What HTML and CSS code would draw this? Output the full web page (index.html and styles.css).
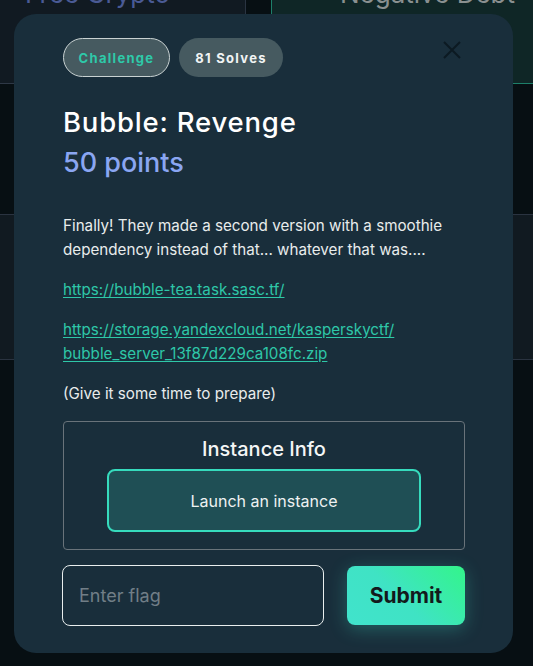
FILE: index.html
```html
<!DOCTYPE html>
<html>
<head>
<meta charset="utf-8">
<link rel="stylesheet" href="styles.css">
</head>
<body>
<div class="bg">
  <div class="row row-top">
    <div class="card card-left"><span class="card-title blue">Free Crypto</span></div>
    <div class="gap-col"></div>
    <div class="card card-right"><span class="card-title gray">Negative Debt</span></div>
  </div>
  <div class="row row-empty"></div>
  <div class="row row-mid">
    <div class="card card-plain"></div>
    <div class="gap-col"></div>
    <div class="card card-plain"></div>
  </div>
</div>

<div class="modal">
  <div class="modal-head">
    <div class="badges">
      <span class="badge badge-cat">Challenge</span>
      <span class="badge badge-solves">81 Solves</span>
    </div>
    <button class="close" aria-label="Close">
      <svg width="18" height="18" viewBox="0 0 18 18"><path d="M1 1L17 17M17 1L1 17" stroke="#0c1a22" stroke-width="2" fill="none"/></svg>
    </button>
  </div>
  <h1 class="title">Bubble: Revenge</h1>
  <div class="points">50 points</div>
  <div class="desc">
    <p class="p-text">Finally! They made a second version with a smoothie dependency instead of that... whatever that was....</p>
    <p class="p-link1"><a href="#">https://bubble-tea.task.sasc.tf/</a></p>
    <p class="p-link2"><a href="#">https://storage.yandexcloud.net/kasperskyctf/<br>bubble_server_13f87d229ca108fc.zip</a></p>
    <p class="p-note">(Give it some time to prepare)</p>
  </div>
  <div class="instance">
    <div class="instance-title">Instance Info</div>
    <button class="launch">Launch an instance</button>
  </div>
  <div class="flag-row">
    <input class="flag-input" type="text" placeholder="Enter flag">
    <button class="submit">Submit</button>
  </div>
</div>
</body>
</html>
```

FILE: styles.css
```css
* { box-sizing: border-box; }
html, body {
  margin: 0;
  padding: 0;
  background: #070f13;
  font-family: Inter, "Noto Sans", sans-serif;
  width: 533px;
  height: 666px;
  overflow: hidden;
}
.bg {
  display: flex;
  flex-direction: column;
}
.row {
  display: flex;
}
.row-top {
  height: 84px;
}
.gap-col {
  width: 25px;
  background: #070f13;
}
.card {
  flex: 1;
  position: relative;
  overflow: hidden;
}
.card-left {
  flex: 0 0 246px;
  background: #111a22;
  border-right: 1px solid #2a3442;
  border-bottom: 1px solid #2e3846;
}
.card-right {
  background: #0f2626;
  border-left: 1px solid #1d7f6a;
  border-bottom: 1px solid #1d7f6a;
}
.card-title {
  display: block;
  font-size: 26px;
  line-height: 26px;
  margin-top: -19px;
  white-space: nowrap;
}
.blue { color: #4a5a95; padding-left: 25px; }
.gray { color: #8a9090; padding-left: 68px; }
.row-empty {
  height: 130px;
}
.row-mid {
  height: 146px;
}
.card-plain {
  background: #111a21;
  border-top: 1px solid #2a3340;
  border-bottom: 1px solid #2a3340;
}
.row-mid .card-plain:first-child { flex: 0 0 246px; }
.row-mid .gap-col { background: #111a21; border-top: 1px solid #2a3340; border-bottom: 1px solid #2a3340; }

.modal {
  position: absolute;
  left: 14px;
  top: 14px;
  width: 499px;
  height: 639px;
  background: #192e3b;
  border-radius: 22px;
  padding: 24px 48px 0 49px;
  color: #f2f4f4;
}
.modal-head {
  display: flex;
  align-items: flex-start;
  justify-content: space-between;
}
.badges {
  display: flex;
  gap: 9px;
}
.badge {
  height: 39px;
  border-radius: 20px;
  background: #465a60;
  display: flex;
  align-items: center;
  font-size: 13px;
  font-weight: 700;
  letter-spacing: 1.3px;
}
.badge-cat {
  width: 107px;
  justify-content: center;
  border: 1px solid #c9d2d2;
  color: #2ec9a9;
}
.badge-solves {
  width: 104px;
  justify-content: center;
  color: #f1f4f4;
}
.close {
  background: none;
  border: 0;
  padding: 0;
  margin: 3px 4px 0 0;
  width: 18px;
  height: 18px;
  display: flex;
}
.title {
  margin: 28px 0 0;
  font-size: 27.5px;
  line-height: 34px;
  font-weight: 500;
  letter-spacing: 0.8px;
  color: #ffffff;
}
.points {
  margin-top: 7px;
  font-size: 27px;
  line-height: 34px;
  color: #8aa6f2;
  font-weight: 500;
}
.desc {
  margin-top: 34px;
  font-size: 15.2px;
  line-height: 24px;
  color: #e8ecec;
}
.desc p { margin: 0; }
.p-link1 { margin-top: 16px !important; }
.p-link2 { margin-top: 16px !important; }
.p-note { margin-top: 16px !important; }
.desc a {
  color: #2ec7a8;
  text-decoration: underline;
  text-underline-offset: 2px;
}
.instance {
  margin-top: 15px;
  width: 402px;
  height: 129px;
  border: 1px solid #69737a;
  border-radius: 4px;
  display: flex;
  flex-direction: column;
  align-items: center;
  padding-top: 14px;
}
.instance-title {
  font-size: 20px;
  line-height: 26px;
  font-weight: 500;
  color: #f4f6f6;
}
.launch {
  margin-top: 7px;
  width: 314px;
  height: 63px;
  background: #1f4f55;
  border: 2px solid #36dbbd;
  border-radius: 8px;
  color: #eef2f2;
  font-family: inherit;
  font-size: 16px;
}
.flag-row {
  margin-top: 15px;
  display: flex;
  align-items: center;
  justify-content: space-between;
  width: 403px;
  margin-left: -1px;
}
.flag-input {
  width: 262px;
  height: 61px;
  border: 1px solid #e9eeee;
  border-radius: 8px;
  background: transparent;
  padding: 0 16px;
  font-family: inherit;
  font-size: 18px;
  color: #fff;
}
.flag-input::placeholder { color: #717e87; }
.submit {
  width: 118px;
  height: 59px;
  border: 0;
  border-radius: 8px;
  background: linear-gradient(225deg, #33f58a 0%, #3fe3c4 55%, #41e3cc 100%);
  box-shadow: 0 4px 18px rgba(64, 230, 200, 0.28);
  color: #13191c;
  font-family: inherit;
  font-size: 21px;
  font-weight: 700;
}
```
